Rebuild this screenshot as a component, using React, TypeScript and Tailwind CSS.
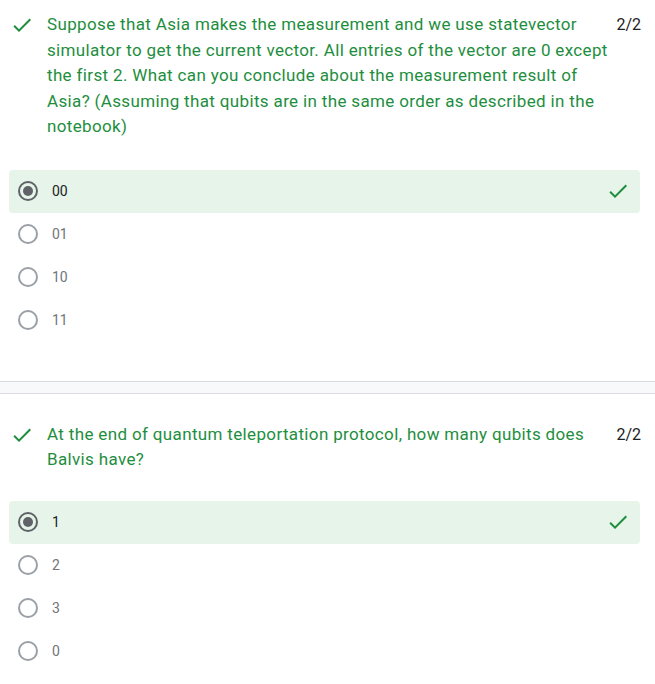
import { Fragment } from "react";

type Question = {
  text: string;
  score: string;
  options: string[];
  selected: number;
  gap: string;
};

const questions: Question[] = [
  {
    text: "Suppose that Asia makes the measurement and we use statevector simulator to get the current vector. All entries of the vector are 0 except the first 2. What can you conclude about the measurement result of Asia? (Assuming that qubits are in the same order as described in the notebook)",
    score: "2/2",
    options: ["00", "01", "10", "11"],
    selected: 0,
    gap: "mt-[30px]",
  },
  {
    text: "At the end of quantum teleportation protocol, how many qubits does Balvis have?",
    score: "2/2",
    options: ["1", "2", "3", "0"],
    selected: 0,
    gap: "mt-[28px]",
  },
];

function Check({ className }: { className?: string }) {
  return (
    <svg viewBox="0 0 24 24" className={className} fill="currentColor">
      <path d="M9 16.17L4.83 12l-1.42 1.41L9 19 21 7l-1.41-1.41z" />
    </svg>
  );
}

function Radio({ checked }: { checked: boolean }) {
  if (checked) {
    return (
      <span className="flex h-5 w-5 items-center justify-center rounded-full border-2 border-[#5f6368]">
        <span className="h-2.5 w-2.5 rounded-full bg-[#5f6368]" />
      </span>
    );
  }
  return <span className="h-5 w-5 rounded-full border-2 border-[#9aa0a6]" />;
}

function QuestionBlock({ q }: { q: Question }) {
  return (
    <div>
      <div className="flex items-start pl-[10px] pr-[14px]">
        <Check className="mt-px h-6 w-6 shrink-0 text-[#1e8e3e]" />
        <p className="ml-[13px] w-[566px] text-[17px] leading-[25.5px] tracking-[0.35px] text-[#1e8e3e]">{q.text}</p>
        <span className="ml-auto text-[16px] leading-[25px] text-[#202124]">{q.score}</span>
      </div>

      <div className={"ml-[9px] mr-[15px] " + q.gap}>
        {q.options.map((opt, i) => {
          const sel = i === q.selected;
          return (
            <div
              key={opt}
              className={
                sel
                  ? "flex h-[43px] items-center rounded-[4px] bg-[#e6f4ea] pl-[9px] pr-[10px]"
                  : "flex h-[43px] items-center pl-[9px] pr-[10px]"
              }
            >
              <Radio checked={sel} />
              <span className={sel ? "ml-[14px] text-[14px] text-[#202124]" : "ml-[14px] text-[14px] text-[#70757a]"}>
                {opt}
              </span>
              {sel && <Check className="ml-auto h-6 w-6 text-[#1e8e3e]" />}
            </div>
          );
        })}
      </div>
    </div>
  );
}

export default function App() {
  return (
    <div className="min-h-[684px] w-[655px] bg-white pt-[12px] font-['Roboto',sans-serif]">
      {questions.map((q, i) => (
        <Fragment key={i}>
          {i > 0 && <div className="mb-[28px] mt-[39px] h-[13px] border-y border-[#dadce0] bg-[#f8f9fa]" />}
          <QuestionBlock q={q} />
        </Fragment>
      ))}
    </div>
  );
}
